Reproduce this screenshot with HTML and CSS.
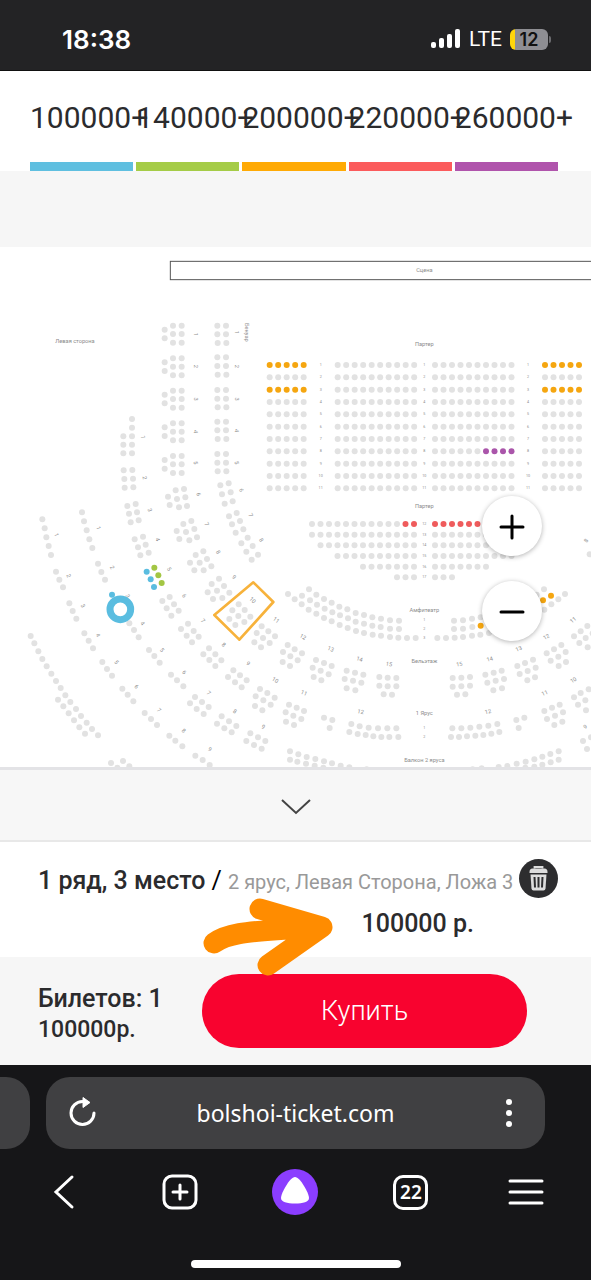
FILE: index.html
```html
<!DOCTYPE html>
<html lang="ru">
  <head>
    <meta charset="UTF-8" />
    <meta name="viewport" content="width=device-width, initial-scale=1.0" />
    <title>bolshoi-ticket.com</title>
    <link rel="stylesheet" href="styles.css">
  </head>
  <body>
    <header class="status-bar">
      <span class="clock">18:38</span>
      <div class="status-icons">
        <svg class="signal" width="30" height="20" viewBox="0 0 30 20" fill="#fff">
          <rect x="0" y="13" width="5" height="6" rx="2" />
          <rect x="8" y="9" width="5" height="10" rx="2" />
          <rect x="16" y="5" width="5" height="14" rx="2" />
          <rect x="24" y="0" width="5" height="19" rx="2" />
        </svg>
        <span class="network">LTE</span>
        <span class="battery">12</span>
      </div>
    </header>

    <main class="page">
      <ul class="prices">
        <li class="price price-blue">100000+</li>
        <li class="price price-green">140000+</li>
        <li class="price price-orange">200000+</li>
        <li class="price price-red">220000+</li>
        <li class="price price-purple">260000+</li>
      </ul>

      <section class="hall">
        <svg id="hall-map" viewBox="0 741 1773 1563" preserveAspectRatio="xMidYMin slice">
          <rect class="stage" x="511" y="784" width="1526" height="55" />
          <g id="seats"></g>
          <g id="labels"></g>
          <path class="box-outline" d="M760 1747L820 1806L718 1919L643 1845Z" />
          <circle class="selected-seat" cx="361" cy="1828" r="31" />
        </svg>
        <div class="zoom">
          <button class="zoom-btn" aria-label="Увеличить">
            <svg width="26" height="26" viewBox="0 0 26 26"><path d="M13 2V24M2 13H24" /></svg>
          </button>
          <button class="zoom-btn" aria-label="Уменьшить">
            <svg width="26" height="26" viewBox="0 0 26 26"><path d="M2 13H24" /></svg>
          </button>
        </div>
      </section>

      <button class="toggle" aria-label="Свернуть">
        <svg width="30" height="18" viewBox="0 0 30 18"><path d="M1 2L15 15L29 2" /></svg>
      </button>

      <section class="ticket">
        <div class="ticket-row">
          <p class="ticket-seat">1 ряд, 3 место <span class="slash">/</span></p>
          <p class="ticket-place">2 ярус, Левая Сторона, Ложа 3</p>
          <button class="remove" aria-label="Удалить">
            <svg width="39" height="39" viewBox="0 0 39 39">
              <circle cx="19.5" cy="19.5" r="19.5" fill="#2d2d2f" />
              <path d="M15.500 9.500V8H23.500V9.500" fill="none" stroke="#ddd" stroke-width="1.8" />
              <path d="M10.500 13Q10.500 9.500 13.500 9.500H25.500Q28.500 9.500 28.500 13V14H10.500Z" fill="#ddd" />
              <path d="M11.500 15.500H27.500L26.500 29.500Q26.300 31.500 24.500 31.500H14.500Q12.700 31.500 12.500 29.500Z" fill="#ddd" />
              <path d="M15.500 18L16 28.500M19.500 18V28.500M23.500 18L23 28.500" stroke="#2d2d2f" stroke-width="2" />
            </svg>
          </button>
        </div>
        <p class="ticket-price">100000 р.</p>
        <svg class="arrow" width="140" height="84" viewBox="0 0 140 84">
          <path d="M14 50C32 37 62 39 112 34M60 16L122 34L68 72" />
        </svg>
      </section>

      <section class="total">
        <div>
          <p class="total-count">Билетов: 1</p>
          <p class="total-sum">100000р.</p>
        </div>
        <button class="buy">Купить</button>
      </section>
    </main>

    <footer class="browser">
      <div class="tabs">
        <div class="prev-tab"></div>
        <div class="address">
          <button class="icon-btn" aria-label="Обновить">
            <svg width="30" height="32" viewBox="0 0 30 32">
              <path d="M27 16A11.500 11.500 0 1 1 15.500 4.500" fill="none" stroke="#fff" stroke-width="3" stroke-linecap="round" />
              <path d="M16 0.500L23 5.500L16 10.500Z" fill="#fff" stroke="#fff" stroke-linejoin="round" />
            </svg>
          </button>
          <a class="url" href="#">bolshoi-ticket.com</a>
          <button class="icon-btn" aria-label="Ещё">
            <svg width="30" height="32" viewBox="0 0 30 32" fill="#fff">
              <circle cx="15" cy="5" r="3" />
              <circle cx="15" cy="16" r="3" />
              <circle cx="15" cy="27" r="3" />
            </svg>
          </button>
        </div>
        <div class="next-gap"></div>
      </div>
      <nav class="toolbar">
        <button class="tool" aria-label="Назад">
          <svg width="36" height="36" viewBox="0 0 36 36"><path d="M25 3L9 18L25 33" /></svg>
        </button>
        <button class="tool" aria-label="Новая вкладка">
          <svg width="36" height="36" viewBox="0 0 36 36">
            <rect x="2" y="2" width="32" height="32" rx="8" />
            <path d="M18 11V25M11 18H25" />
          </svg>
        </button>
        <button class="tool" aria-label="Алиса">
          <svg width="46" height="46" viewBox="0 0 46 46">
            <circle class="alice" cx="23" cy="23" r="23" />
            <path class="alice-mark" d="M23 8C28 8 37 24 37 29C37 33 31 34.500 23 34.500C15 34.500 9 33 9 29C9 24 18 8 23 8Z" />
          </svg>
        </button>
        <button class="tool" aria-label="Вкладки"><span class="tab-count">22</span></button>
        <button class="tool" aria-label="Меню">
          <svg width="36" height="36" viewBox="0 0 36 36"><path d="M2 7H34M2 18H34M2 29H34" /></svg>
        </button>
      </nav>
      <div class="home-indicator"></div>
    </footer>

    <script src="seats.js"></script>
  </body>
</html>
```

FILE: styles.css
```css
* {
  margin: 0;
  padding: 0;
  box-sizing: border-box;
}

body {
  font-family: Roboto, "Noto Sans", sans-serif;
  background-color: #fff;
  color: #2b2b2d;
  display: flex;
  flex-direction: column;
  min-height: 100vh;
}

button {
  border: none;
  background: none;
  cursor: pointer;
  font-family: inherit;
}

svg {
  display: block;
}

/* phone status bar */
.status-bar {
  display: flex;
  justify-content: space-between;
  align-items: center;
  height: 71px;
  padding: 8px 43px 0 62px;
  background: #232325;
  border-bottom: 1px solid #111;
  color: #fff;
  font-family: Inter, sans-serif;
}

.clock {
  font-size: 26px;
  font-weight: 600;
}

.status-icons {
  display: flex;
  align-items: center;
  gap: 8px;
}

.network {
  font-family: Roboto, sans-serif;
  font-size: 21px;
}

.battery {
  position: relative;
  width: 38px;
  height: 21px;
  border-radius: 6px;
  background: linear-gradient(to right, #ffd60a 5px, #8e8e93 5px);
  color: #111;
  font-size: 18px;
  font-weight: 600;
  line-height: 21px;
  text-align: center;
}

.battery::after {
  content: "";
  position: absolute;
  left: 39px;
  top: 7px;
  width: 2px;
  height: 7px;
  border-radius: 0 2px 2px 0;
  background: #6b6b6f;
}

.page {
  flex: 1;
  display: flex;
  flex-direction: column;
}

/* price legend */
.prices {
  display: grid;
  grid-template-columns: repeat(5, minmax(0, 1fr));
  gap: 3px;
  padding: 0 33px 0 30px;
  list-style: none;
}

.price {
  height: 100px;
  border-bottom: 9px solid;
  font-size: 30px;
  line-height: 94px;
  white-space: nowrap;
}

.price-blue { border-color: #5fbfe0; }
.price-green { border-color: #a5cc47; }
.price-orange { border-color: #ffaa05; }
.price-red { border-color: #fb5b5c; }
.price-purple { border-color: #b054ac; }

/* hall map */
.hall {
  position: relative;
  flex: 1;
  min-height: 400px;
  display: flex;
  border-top: 76px solid #f6f6f6;
  border-bottom: 3px solid #e3e3e6;
}

#hall-map {
  flex: 1;
  width: 100%;
  height: 520px;
}

.stage {
  fill: none;
  stroke: #555;
  stroke-width: 3;
}

.seat { fill: #e2e2e2; }
.seat.blue { fill: #5abde0; }
.seat.green { fill: #a3c644; }
.seat.orange { fill: #f5a610; }
.seat.red { fill: #ef5b5c; }
.seat.purple { fill: #aa55aa; }

#labels text {
  fill: #8c8c8c;
  font-size: 17px;
  text-anchor: middle;
  dominant-baseline: central;
}

#labels .row-number {
  font-size: 11px;
}

.box-outline {
  fill: none;
  stroke: #f7b23b;
  stroke-width: 8;
  stroke-linejoin: round;
}

.selected-seat {
  fill: #fff;
  stroke: #5abde0;
  stroke-width: 21;
}

.zoom {
  position: absolute;
  top: 249px;
  right: 49px;
  display: flex;
  flex-direction: column;
  gap: 25px;
}

.zoom-btn {
  display: flex;
  align-items: center;
  justify-content: center;
  width: 60px;
  height: 60px;
  padding-top: 2px;
  border-radius: 50%;
  background: #fff;
  box-shadow: 0 1px 5px rgba(0, 0, 0, 0.3);
}

.zoom-btn path {
  stroke: #000;
  stroke-width: 3;
  stroke-linecap: round;
}

/* basket */
.toggle {
  display: flex;
  align-items: center;
  justify-content: center;
  height: 72px;
  padding-top: 3px;
  background: #f7f7f7;
  border-bottom: 2px solid #e8e8e8;
}

.toggle path {
  fill: none;
  stroke: #444;
  stroke-width: 2;
}

.ticket {
  position: relative;
  height: 115px;
  padding: 17px 33px 0 38px;
}

.ticket-row {
  display: flex;
  align-items: center;
  gap: 6px;
  white-space: nowrap;
}

.ticket-seat {
  padding-top: 4px;
  font-size: 25px;
  font-weight: 500;
}

.slash {
  color: #000;
  font-weight: 400;
}

.ticket-place {
  padding-top: 6px;
  color: #999;
  font-size: 20px;
}

.remove {
  margin-left: auto;
}

.ticket-price {
  padding: 11px 84px 0 0;
  font-size: 25px;
  font-weight: 500;
  line-height: 30px;
  text-align: right;
}

.arrow {
  position: absolute;
  left: 200px;
  top: 51px;
}

.arrow path {
  fill: none;
  stroke: #ff8c00;
  stroke-width: 21;
  stroke-linecap: round;
  stroke-linejoin: round;
}

.total {
  display: grid;
  grid-template-columns: 164px 1fr;
  align-items: center;
  height: 108px;
  padding: 0 64px 0 38px;
  background: #f6f6f6;
  font-weight: 500;
}

.total-count {
  padding-top: 6px;
  font-size: 25px;
  line-height: 32px;
}

.total-sum {
  font-size: 23px;
  line-height: 30px;
}

.buy {
  height: 74px;
  border-radius: 37px;
  background: #f8032f;
  color: #fff;
  font-size: 27px;
  font-weight: 300;
}

/* browser controls */
.browser {
  display: flex;
  flex-direction: column;
  height: 215px;
  padding: 12px 0;
  background: #161618;
}

.tabs {
  display: flex;
  gap: 16px;
  height: 72px;
}

.prev-tab {
  width: 30px;
  border-radius: 0 24px 24px 0;
  background: #404042;
}

.next-gap {
  width: 30px;
}

.address {
  flex: 1;
  display: flex;
  align-items: center;
  justify-content: space-between;
  padding: 0 21px;
  border-radius: 24px;
  background: #404042;
}

.url {
  color: #fff;
  font-family: "Noto Sans", sans-serif;
  font-size: 23px;
  line-height: 28px;
  text-decoration: none;
}

.toolbar {
  display: grid;
  grid-template-columns: repeat(5, 1fr);
  height: 86px;
  padding: 0 7px;
}

.tool {
  display: flex;
  align-items: center;
  justify-content: center;
}

.tool svg {
  fill: none;
  stroke: #fff;
  stroke-width: 3;
  stroke-linecap: round;
}

.tool .alice {
  fill: #8b3dff;
  stroke: none;
}

.tool .alice-mark {
  fill: #fff;
  stroke: none;
}

.tab-count {
  width: 35px;
  height: 35px;
  border: 3px solid #fff;
  border-radius: 10px;
  color: #fff;
  font-family: "Noto Sans", sans-serif;
  font-size: 19px;
  font-weight: 600;
  line-height: 29px;
}

.home-indicator {
  width: 210px;
  height: 8px;
  margin: auto auto 0;
  border-radius: 4px;
  background: #fff;
}
```

FILE: seats.js
```js
const SVG = "http://www.w3.org/2000/svg";
const seatLayer = document.getElementById("seats");
const labelLayer = document.getElementById("labels");

function addSeat(x, y, color) {
  const seat = document.createElementNS(SVG, "circle");
  seat.setAttribute("cx", x);
  seat.setAttribute("cy", y);
  seat.setAttribute("r", 9);
  seat.setAttribute("class", color ? "seat " + color : "seat");
  seatLayer.appendChild(seat);
}

function addLabel(x, y, text, angle, className) {
  const label = document.createElementNS(SVG, "text");
  label.setAttribute("x", x);
  label.setAttribute("y", y);
  if (angle) label.setAttribute("transform", `rotate(${angle} ${x} ${y})`);
  if (className) label.setAttribute("class", className);
  label.textContent = text;
  labelLayer.appendChild(label);
}

// "x,y x,y ..." relative to the sector origin
function addSeats(ox, oy, list, color) {
  list.split(" ").forEach((pair) => {
    const [x, y] = pair.split(",").map(Number);
    addSeat(ox + x, oy + y, color);
  });
}

// box numbers are turned towards the middle of the hall
function addNumbers(ox, oy, list) {
  list.split(" ").forEach((item) => {
    const [n, dx, dy] = item.split(",").map(Number);
    const x = ox + dx;
    const y = oy + dy;
    const angle = (Math.atan2(1273 - x, Math.max(0, y - 1285)) * 180) / Math.PI;
    addLabel(x, y, n, Math.round(angle));
  });
}

// stalls, rows 1-11
for (let row = 1; row <= 11; row++) {
  const y = 1095 + (row - 1) * 37;
  const side = row === 1 || row === 3 ? "orange" : "";
  for (let i = 0; i < 5; i++) {
    addSeat(809 + i * 25.5, y, side);
    addSeat(1635 + i * 25.5, y, side);
  }
  for (let i = 0; i < 10; i++) {
    addSeat(1013 + i * 25.5, y);
    addSeat(1305 + i * 25.5, y, row === 8 && i > 5 ? "purple" : "");
  }
  [962, 1273, 1584].forEach((x) => addLabel(x, y, row, 0, "row-number"));
}

// stalls, rows 12-17
[13, 13, 12, 10, 7, 3].forEach((count, row) => {
  const y = 1572 + row * 32;
  for (let i = 0; i < count; i++) {
    addSeat(1242 - i * 25.5, y, row === 0 && i < 2 ? "red" : "");
    addSeat(1305 + i * 25.5, y, row === 0 && i < 7 ? "red" : "");
  }
  addLabel(1273, y, 12 + row, 0, "row-number");
});

// amphitheatre
const amphi = [
  "57,268 79,284 102,297 125,308 148,320 172,328 197,339 222,345 247,352 273,356 300,361 327,362",
  "-6,282 14,298 36,287 60,301 81,314 104,326 127,337 150,346 174,355 197,365 222,371 247,377 272,381 300,386 327,387",
  "35,313 56,329 79,341 102,354 125,364 149,375 173,384 198,393 222,399 248,404 273,407 300,411 325,413 351,414 377,414",
];
amphi.forEach((line, row) => {
  line.split(" ").forEach((pair) => {
    const [x, y] = pair.split(",").map(Number);
    const free = row === 1 && (x === 36 || x === 60 || x === 247);
    addSeat(870 + x, 1500 + y);
    addSeat(1689 - x, 1500 + y, free ? "orange" : "");
  });
  addLabel(1273, 1861 + row * 26, row + 1, 0, "row-number");
});

// straight boxes along the left side
[77, 175, 272, 370, 468].forEach((y) => {
  addSeats(0, 900 + y, "494,12 494,38 519,0 545,0 519,25 545,25 519,51 545,51");
});
[77, 172, 270, 365, 462].forEach((y) => {
  addSeats(0, 900 + y, "652,0 678,0 652,26 678,26 653,52 679,52");
});

// upper left
addSeats(0, 900, "396,357 396,383 370,409 396,409 370,434 396,434 370,460 396,460");
addSeats(0, 900, "371,511 397,510 373,537 399,536 374,563 400,562");
addSeats(0, 900, "382,618 407,612 387,641 411,637 392,667 416,661");
addSeats(0, 900, "661,556 686,550 666,583 692,577 674,611 698,604");
addSeats(0, 900, "527,571 552,567 504,590 531,597 556,592 509,615 537,622 561,618");
addNumbers(0, 900, "1,587,103 2,587,199 3,587,297 4,587,395 5,587,488 6,596,583");
addNumbers(0, 900, "1,710,97 2,710,199 3,710,297 4,710,392 5,710,488 6,724,570");
addNumbers(0, 900, "1,429,411 2,434,533 3,450,630");

// baignoire and dress circle, left
addSeats(0, 1500, "687,49 710,39 696,73 720,63 707,98 730,88");
addSeats(0, 1500, "724,130 743,113 739,155 758,138 755,179 774,164");
addSeats(0, 1500, "550,72 574,63 530,93 558,96 583,87 538,117 568,121 591,112");
addSeats(0, 1500, "587,165 610,154 570,188 599,188 621,177 583,211 611,211 634,199");
addSeats(0, 1500, "635,252 657,236 623,277 651,272 672,258 639,297 667,294 688,278");
addSeats(0, 1500, "697,331 716,313 688,357 715,348 734,330 706,375 733,366 751,350");
addSeats(0, 1500, "770,399 785,379 763,427 789,414 805,394 783,442 809,429 825,409");
addSeats(0, 1500, "849,456 863,435 848,486 871,469 884,448 870,498 893,481 906,460");
addNumbers(0, 1500, "7,752,45 8,784,120 7,620,72 8,655,156 9,702,231 10,758,300 11,829,360 12,909,410");

// first tier, left
addSeats(0, 1500, "404,118 429,110 414,142 437,134 421,166 446,158");
addSeats(0, 1500, "440,215 452,238 462,261 336,284", "blue");
addSeats(0, 1500, "463,203 475,226 485,249", "green");
addSeats(0, 1500, "487,303 509,291 500,325 522,313 514,347 536,332");
addSeats(0, 1500, "543,387 564,371 560,407 581,393 576,427 596,410");
addSeats(0, 1500, "610,463 627,445 628,480 646,463 646,498 664,481");
addSeats(0, 1500, "684,531 700,511 705,547 720,526 725,562 740,541");
addSeats(0, 1500, "767,589 780,567 802,579 765,618 790,601 824,593 787,631 812,614");
addSeats(0, 1500, "857,637 867,614 890,623 858,665 880,647 882,675 912,633 904,657");
addNumbers(0, 1500, "4,473,118 5,508,207 6,553,287 7,609,362 8,671,434 9,745,490 10,826,540 11,912,579");

// second tier, left
addSeats(0, 1500, "246,37 252,64 260,91 268,118 277,144 294,191 304,216 315,239");
addSeats(0, 1500, "388,370 402,390 416,412 447,450 463,468 479,488 513,524 531,541 550,559");
addSeats(0, 1500, "570,610 585,591 606,606 590,627 626,621 611,642");
addSeats(0, 1500, "651,671 665,649 687,664 673,685 709,678 695,697");
addSeats(0, 1500, "739,723 751,700 774,712 762,735 796,723 785,746");
addNumbers(0, 1500, "1,296,84 2,337,202 3,383,288 4,428,370 5,486,450 6,553,517 7,626,579 8,705,634 9,790,680");

// third tier and balcony, left
addSeats(0, 1500, "127,58 134,85 139,112 146,138 153,165 168,215 178,239 189,262 208,310 218,333 229,356");
addSeats(0, 1500, "253,400 266,422 279,445 307,486 321,507 336,527 367,566 383,584 400,604");
addSeats(0, 1500, "434,639 453,657 471,675 508,707 526,722 547,739 586,767 608,780 629,795");
addSeats(0, 1500, "92,408 103,430 115,454 127,477 140,499 154,521 168,543 182,564 196,586 211,606 228,627 243,648 260,668 276,687 294,706");
addSeats(0, 1500, "174,599 190,619 206,640 222,661 238,682 255,701 333,789 369,783 388,799 352,803");
addNumbers(0, 1500, "1,170,104 2,206,227 3,249,317 4,294,406 5,350,486 6,410,560 7,477,630 8,551,692 9,630,748");

// dress circle, middle and right
addSeats(870, 1500, "78,480 102,489 125,498 68,503 92,512 116,523 71,531 94,541");
addSeats(870, 1500, "170,512 195,518 220,524 164,537 189,542 214,548 170,565 196,571");
addSeats(870, 1500, "268,531 293,533 319,534 268,557 293,559 319,559 281,583 306,584");
addSeats(870, 1500, "488,534 514,533 540,531 488,560 514,559 540,557 501,584 526,583");
addSeats(870, 1500, "586,524 611,518 635,512 592,548 617,542 642,537 610,571 636,565");
addSeats(870, 1500, "682,498 705,489 729,479 689,522 713,513 737,503 712,541 735,532");
addSeats(870, 1500, "770,460 792,448 814,435 782,482 805,470 827,456 806,498 828,486");
addSeats(870, 1500, "852,409 872,394 892,378 868,429 887,414 893,442 908,400 899,163");
addNumbers(870, 1500, "13,122,447 14,209,477 15,297,492 15,508,492 14,599,477 13,686,446 12,769,410 11,849,360 8,888,122");

// first tier, middle and right
addSeats(870, 1500, "102,653 127,660 119,684 679,660 703,653 686,684");
addSeats(870, 1500, "184,672 209,679 236,683 264,685 292,685 319,685 178,696 203,702 227,705 250,709 274,711 298,711 325,711");
addSeats(870, 1500, "487,685 514,685 541,683 568,680 595,677 622,672 483,711 507,711 531,709 556,707 580,705 604,701 628,696");
addSeats(870, 1500, "763,633 786,623 809,614 771,657 795,647 819,637 793,675 817,665");
addSeats(870, 1500, "852,592 872,579 896,568 864,614 886,601 888,631 879,723 891,747 903,712");
addNumbers(870, 1500, "12,212,635 12,594,635 11,764,579 10,850,540 9,886,680");
addLabel(1273, 2185, 1, 0, "row-number");
addLabel(1273, 2211, 2, 0, "row-number");

// second tier balcony
addSeats(870, 1500, "0,754 0,779 25,763 22,785 50,771 48,791 76,777 74,797 102,784 100,803 126,790 152,797 178,802 230,808 258,810");
addSeats(870, 1500, "495,810 520,810 548,808 575,805 626,801 652,798 680,791 707,785 733,778 757,770 781,762 806,754");
addSeats(870, 1500, "706,803 733,800 757,794 782,787 806,779");

addLabel(1273, 811, "Сцена");
addLabel(225, 1022, "Левая сторона");
addLabel(740, 997, "Бенуар", 90);
addLabel(1273, 1031, "Партер");
addLabel(1273, 1518, "Партер");
addLabel(1273, 1831, "Амфитеатр");
addLabel(1273, 1983, "Бельэтаж");
addLabel(1273, 2138, "1 Ярус");
addLabel(1273, 2280, "Балкон 2 яруса");
```
